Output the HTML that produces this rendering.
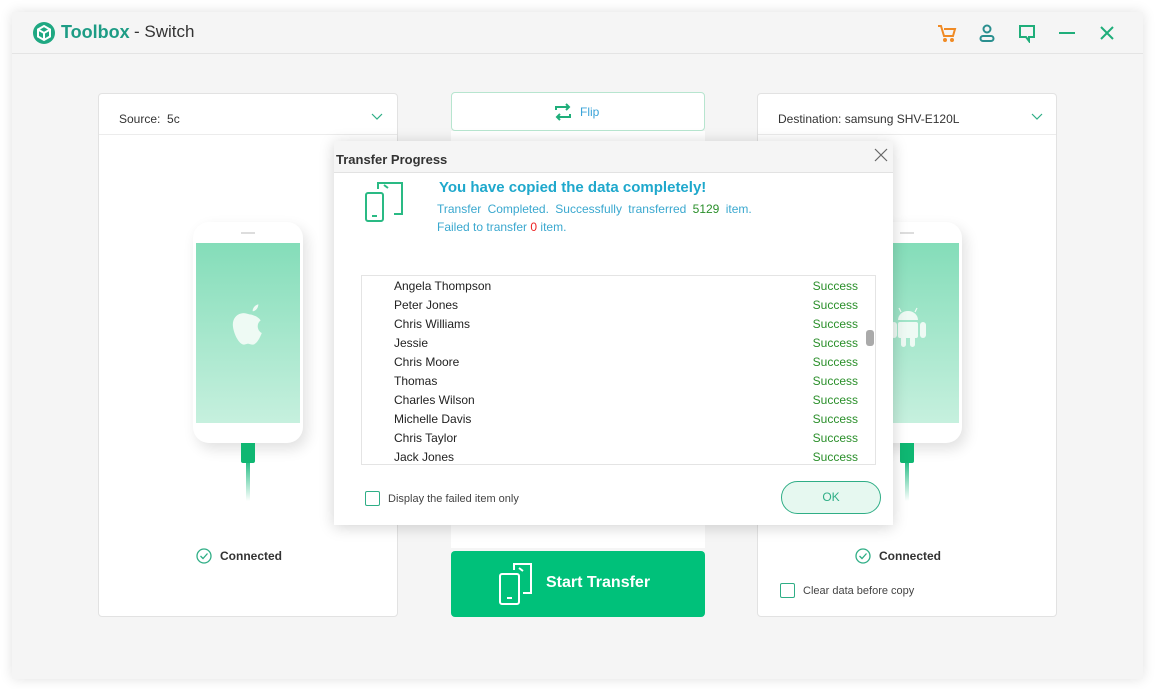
<!DOCTYPE html>
<html><head><meta charset="utf-8"><style>
*{box-sizing:border-box;margin:0;padding:0}
body{width:1156px;height:689px;background:#fff;font-family:"Liberation Sans",sans-serif;position:relative;overflow:hidden;font-size:12px;color:#333}
.abs{position:absolute}
.win{left:12px;top:12px;width:1131px;height:667px;background:#f5f5f5;box-shadow:0 0 12px rgba(0,0,0,.12)}
.hdr{left:12px;top:12px;width:1131px;height:42px;border-bottom:1px solid #e4e4e4}
.card{background:#fff;border:1px solid #e2e2e2;border-radius:4px}
.phone{width:110px;height:221px;background:#fff;border-radius:16px;box-shadow:4px 6px 14px rgba(0,0,0,.12)}
.scr{left:3px;top:21px;width:104px;height:180px;background:linear-gradient(#84ddb9,#c6f0de)}
.cb{width:15px;height:15px;border:1.5px solid #2fae86;border-radius:2px}
.row{height:19px;line-height:19px;font-size:12px;color:#222}
.row span{position:absolute;right:17px;color:#2a8f2a}
</style></head><body>
<div class="abs win"></div>
<div class="abs hdr"></div>
<svg class="abs" style="left:32px;top:21px" width="24" height="24" viewBox="0 0 24 24"><circle cx="12" cy="12" r="11" fill="#1fa882"/><path d="M12 5l6 3.5v7L12 19l-6-3.5v-7z" fill="none" stroke="#fff" stroke-width="2"/><path d="M6 8.5l6 3.5 6-3.5M12 12v7" stroke="#fff" stroke-width="2" fill="none"/></svg>
<div class="abs" style="left:61px;top:22px;font-size:18px;font-weight:bold;color:#1d9c85">Toolbox</div>
<div class="abs" style="left:134px;top:22px;font-size:17px;color:#333">- Switch</div>
<svg class="abs" style="left:936px;top:23px" width="22" height="20" viewBox="0 0 22 20" fill="none" stroke="#f08a24" stroke-width="2"><path d="M2 3h3l3 10h9l2-7H8"/><circle cx="9" cy="17" r="1"/><circle cx="16" cy="17" r="1"/></svg>
<svg class="abs" style="left:977px;top:23px" width="20" height="20" viewBox="0 0 20 20" fill="none" stroke="#2a8f8f" stroke-width="2"><circle cx="10" cy="6" r="3.5"/><rect x="3.5" y="13" width="13" height="5" rx="2.5"/></svg>
<svg class="abs" style="left:1017px;top:23px" width="20" height="20" viewBox="0 0 20 20" fill="none" stroke="#1fae7a" stroke-width="2"><path d="M3 3h14v11h-5l0 4-3-4H3z"/></svg>
<div class="abs" style="left:1059px;top:32px;width:16px;height:2px;background:#1fae7a"></div>
<svg class="abs" style="left:1099px;top:25px" width="16" height="16" viewBox="0 0 16 16" stroke="#1fae7a" stroke-width="2"><path d="M2 2l12 12M14 2L2 14"/></svg>

<div class="abs card" style="left:98px;top:93px;width:300px;height:524px"></div>
<div class="abs" style="left:99px;top:134px;width:298px;height:1px;background:#ececec"></div>
<div class="abs" style="left:119px;top:112px;font-size:12px">Source:&nbsp; 5c</div>
<svg class="abs" style="left:371px;top:113px" width="12" height="8"><path d="M1 1l5 5 5-5" fill="none" stroke="#2fae86" stroke-width="1.2"/></svg>
<div class="abs phone" style="left:193px;top:222px"><div class="abs" style="left:48px;top:10px;width:14px;height:1.5px;background:#ddd"></div><div class="abs scr"></div>
<svg class="abs" style="left:35px;top:80px" width="40" height="46" viewBox="0 0 30 40"><path d="M24 2c-3 1-5 3-5 6 3 0 5-3 5-6zM18 11c-3 0-5-2-9-1-5 1-8 6-7 12 1 7 6 16 10 15 3-1 3-1 6 0 4 1 7-5 9-10-4-2-5-8-1-11-2-3-5-4-8-5z" fill="#eefaf4"/></svg></div>
<div class="abs" style="left:241px;top:443px;width:14px;height:20px;background:#0fb772;border-radius:0 0 2px 2px"></div>
<div class="abs" style="left:246px;top:463px;width:4px;height:38px;background:linear-gradient(#2ec08a,rgba(255,255,255,0))"></div>
<svg class="abs" style="left:196px;top:548px" width="16" height="16" fill="none" stroke="#2fae86" stroke-width="1.3"><circle cx="8" cy="8" r="7"/><path d="M4.5 8l2.5 2.5 4.5-5"/></svg>
<div class="abs" style="left:220px;top:549px;font-weight:bold;font-size:12px;color:#333">Connected</div>

<div class="abs" style="left:451px;top:131px;width:254px;height:417px;background:#fff"></div>
<div class="abs" style="left:451px;top:92px;width:254px;height:39px;background:#fff;border:1px solid #b7e5cf;border-radius:4px"></div>
<svg class="abs" style="left:553px;top:102px" width="20" height="20" viewBox="0 0 20 20" fill="none" stroke="#1fae7a" stroke-width="2"><path d="M3 8V5h13M13 2l3 3-3 3M17 12v3H4M7 18l-3-3 3-3"/></svg>
<div class="abs" style="left:580px;top:105px;font-size:12px;color:#3aa3d8">Flip</div>
<div class="abs" style="left:451px;top:551px;width:254px;height:66px;background:#00c17a;border-radius:4px"></div>
<svg class="abs" style="left:499px;top:563px" width="36" height="42" viewBox="0 0 36 42" fill="none" stroke="#fff" stroke-width="2"><rect x="1" y="11" width="19" height="30" rx="2"/><path d="M8 35h5M15 7V1h17v29h-8M20 5l4 3"/></svg>
<div class="abs" style="left:546px;top:574px;font-size:16px;font-weight:bold;color:#fff">Start Transfer</div>

<div class="abs card" style="left:757px;top:93px;width:300px;height:524px"></div>
<div class="abs" style="left:758px;top:134px;width:298px;height:1px;background:#ececec"></div>
<div class="abs" style="left:778px;top:112px;font-size:12px">Destination: samsung SHV-E120L</div>
<svg class="abs" style="left:1031px;top:113px" width="12" height="8"><path d="M1 1l5 5 5-5" fill="none" stroke="#2fae86" stroke-width="1.2"/></svg>
<div class="abs phone" style="left:852px;top:222px"><div class="abs" style="left:48px;top:10px;width:14px;height:1.5px;background:#ddd"></div><div class="abs scr"></div>
<svg class="abs" style="left:38px;top:78px" width="40" height="48" viewBox="0 0 40 48" fill="#eefaf4"><path d="M8 20a10 9 0 0 1 20 0z"/><path d="M11 12l-2-4M25 12l2-4" stroke="#eefaf4" stroke-width="1.2"/><rect x="8" y="22" width="20" height="16" rx="2"/><rect x="30" y="22" width="6" height="16" rx="3"/><rect x="1" y="22" width="6" height="16" rx="3"/><rect x="11" y="36" width="5" height="11" rx="2.5"/><rect x="20" y="36" width="5" height="11" rx="2.5"/></svg></div>
<div class="abs" style="left:900px;top:443px;width:14px;height:20px;background:#0fb772;border-radius:0 0 2px 2px"></div>
<div class="abs" style="left:905px;top:463px;width:4px;height:38px;background:linear-gradient(#2ec08a,rgba(255,255,255,0))"></div>
<svg class="abs" style="left:855px;top:548px" width="16" height="16" fill="none" stroke="#2fae86" stroke-width="1.3"><circle cx="8" cy="8" r="7"/><path d="M4.5 8l2.5 2.5 4.5-5"/></svg>
<div class="abs" style="left:879px;top:549px;font-weight:bold;font-size:12px;color:#333">Connected</div>
<div class="abs cb" style="left:780px;top:583px"></div>
<div class="abs" style="left:803px;top:585px;font-size:11px;color:#444">Clear data before copy</div>

<div class="abs" style="left:334px;top:141px;width:559px;height:384px;background:#fff;box-shadow:0 2px 14px rgba(0,0,0,.18)"></div>
<div class="abs" style="left:334px;top:141px;width:559px;height:32px;background:#f5f5f5;border-bottom:1px solid #e2e2e2"></div>
<div class="abs" style="left:336px;top:152px;font-size:13px;font-weight:bold;color:#333">Transfer Progress</div>
<svg class="abs" style="left:874px;top:148px" width="14" height="14" stroke="#666" stroke-width="1.2"><path d="M1 1l12 12M13 1L1 13"/></svg>
<svg class="abs" style="left:364px;top:181px" width="40" height="42" viewBox="0 0 40 42" fill="none" stroke="#2aba84" stroke-width="2"><rect x="2" y="12" width="17" height="28" rx="2"/><path d="M8 35h5M14 8V2h24v31h-8M20 4l4 3"/></svg>
<div class="abs" style="left:439px;top:179px;font-size:15px;font-weight:bold;color:#1fa8cc">You have copied the data completely!</div>
<div class="abs" style="left:437px;top:202px;font-size:12px;color:#3aa8cf;word-spacing:3px">Transfer Completed. Successfully transferred <span style="color:#2a8f2a">5129</span> item.</div>
<div class="abs" style="left:437px;top:220px;font-size:12px;color:#3aa8cf">Failed to transfer <span style="color:#e22">0</span> item.</div>
<div class="abs" style="left:361px;top:275px;width:515px;height:190px;border:1px solid #e4e4e4;padding:1px 0 0 32px">
<div class="row">Angela Thompson<span>Success</span></div>
<div class="row">Peter Jones<span>Success</span></div>
<div class="row">Chris Williams<span>Success</span></div>
<div class="row">Jessie<span>Success</span></div>
<div class="row">Chris Moore<span>Success</span></div>
<div class="row">Thomas<span>Success</span></div>
<div class="row">Charles Wilson<span>Success</span></div>
<div class="row">Michelle Davis<span>Success</span></div>
<div class="row">Chris Taylor<span>Success</span></div>
<div class="row">Jack Jones<span>Success</span></div>
</div>
<div class="abs" style="left:866px;top:330px;width:8px;height:16px;background:#aaa;border-radius:3px"></div>
<div class="abs cb" style="left:365px;top:491px"></div>
<div class="abs" style="left:388px;top:493px;font-size:11px;color:#444">Display the failed item only</div>
<div class="abs" style="left:781px;top:481px;width:100px;height:33px;border:1.5px solid #2fae86;border-radius:17px;background:#e6f8f0;text-align:center;line-height:30px;color:#2fae86;font-size:12px">OK</div>
</body></html>
